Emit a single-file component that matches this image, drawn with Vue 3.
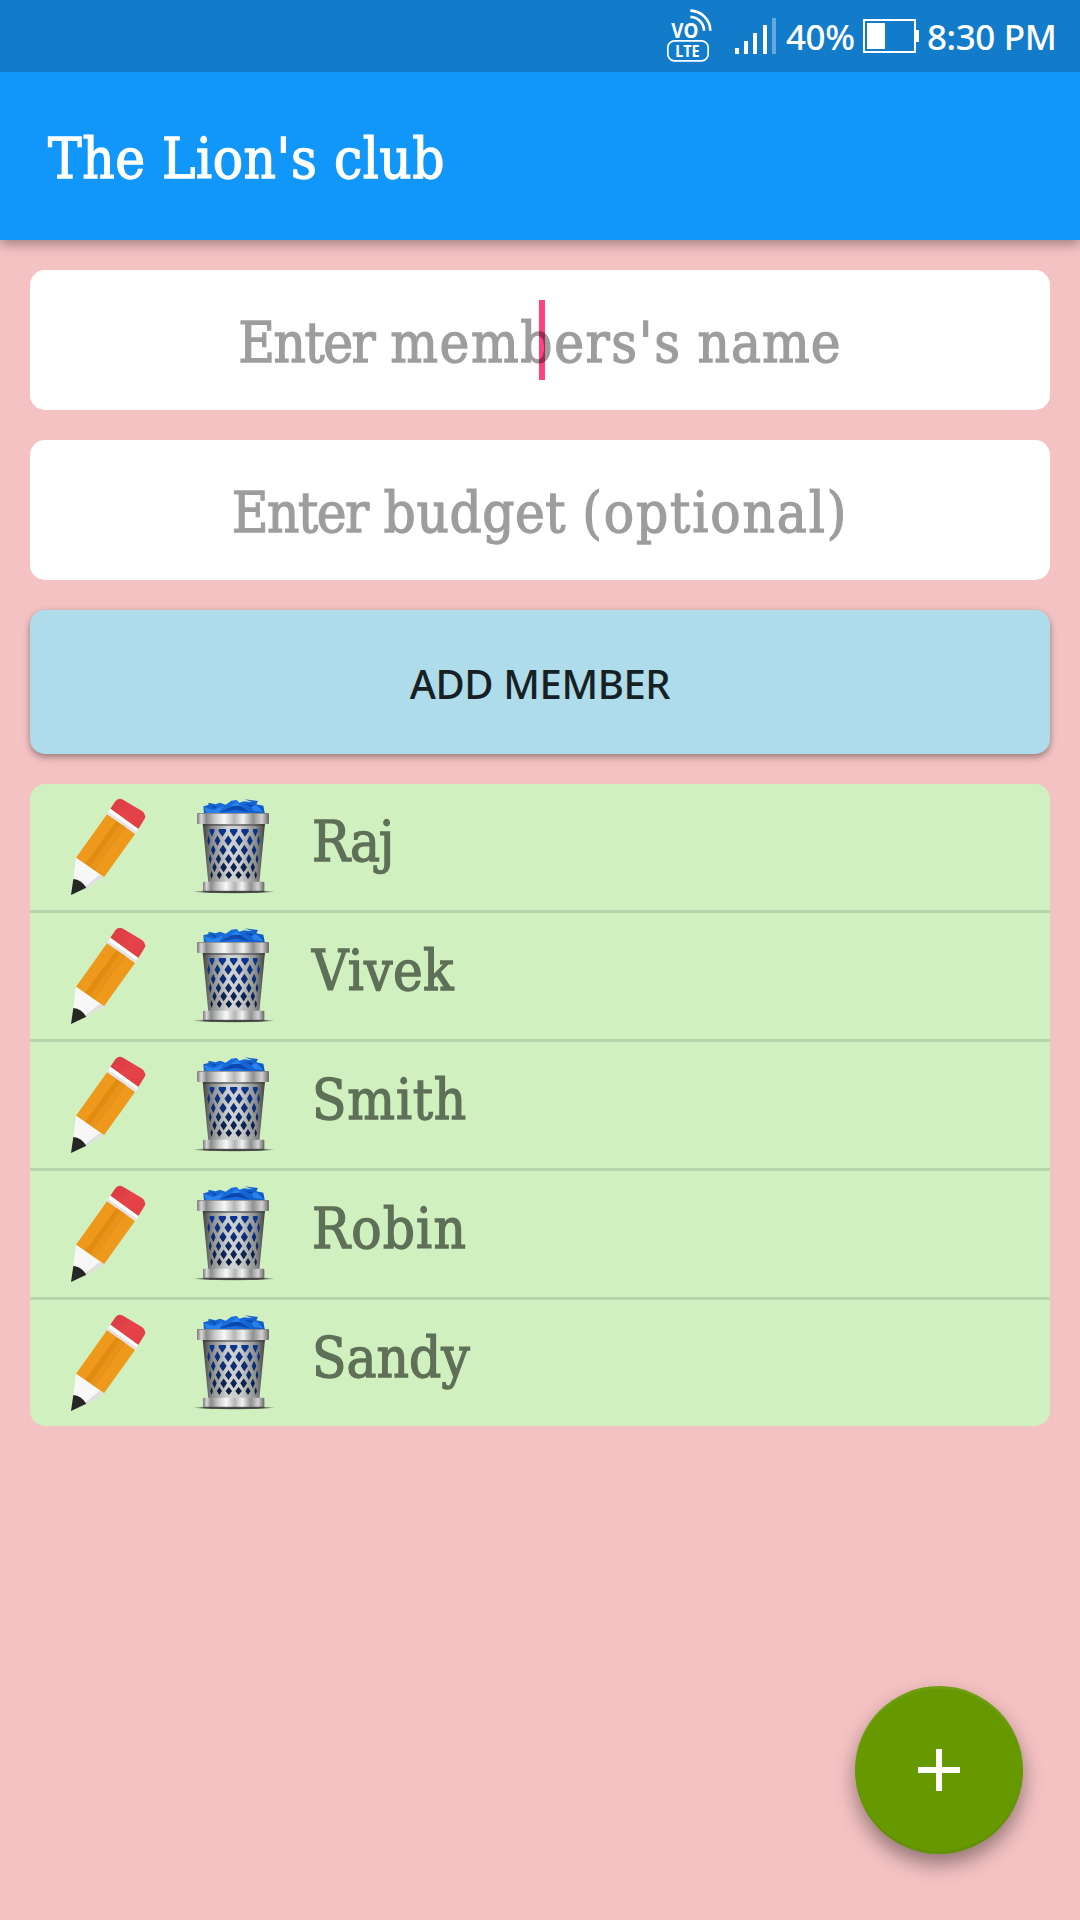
<script setup>
const members = [
  { name: 'Raj', spacing: -1.2 },
  { name: 'Vivek', spacing: 0.3 },
  { name: 'Smith', spacing: 0.8 },
  { name: 'Robin', spacing: 1.2 },
  { name: 'Sandy', spacing: 0 },
]

const nameHint = [
  { text: 'Enter', spacing: -1.5 },
  { text: "members's", spacing: 1.6 },
  { text: 'name', spacing: 1 },
]
const budgetHint = [
  { text: 'Enter', spacing: -1.5 },
  { text: 'budget', spacing: 0.55 },
  { text: '(optional)', spacing: 1.9 },
]

// Openings of the wire basket: alternating rows of diamonds that narrow toward the sides.
const cx = 641
const diamonds = []
;[
  [172, 0], [197, 1], [225, 0], [252, 1], [277, 0], [300, 1],
].forEach(([y, odd]) => {
  const k = 1 - (y - 172) * 0.0011
  const offs = odd ? [-77, -50, -17, 17, 50, 77] : [-65, -34, 0, 34, 65]
  offs.forEach((o) => {
    const w = (Math.abs(o) > 70 ? 4.5 : Math.abs(o) > 60 ? 7.5 : Math.abs(o) > 45 ? 9 : 11.5) * k
    const h = y === 300 ? 12 : 16.5 * k
    const x = cx + o * k
    diamonds.push(
      y === 172
        ? `M${x - w * 0.9} 162H${x + w * 0.9}L${x + w} 169L${x} 185L${x - w} 169Z`
        : `M${x} ${y - h}L${x + w} ${y}L${x} ${y + h}L${x - w} ${y}Z`,
    )
  })
})
const mesh = diamonds.join('')
</script>

<template>
  <div class="screen">
    <header class="status">
      <svg class="volte" viewBox="0 0 150 180" width="50" height="60">
        <rect x="23.500" y="107.500" width="121" height="60" rx="20" fill="none" stroke="#fff" stroke-width="5" />
        <g fill="none" stroke="#fff" stroke-width="8">
          <path d="M91 17A61 61 0 0 1 151 77" />
          <path d="M91 36A41 41 0 0 1 132 77" />
        </g>
        <text x="34" y="98" font-size="62" textLength="81" lengthAdjust="spacingAndGlyphs">VO</text>
        <text x="46" y="155" font-size="46" textLength="73" lengthAdjust="spacingAndGlyphs">LTE</text>
      </svg>
      <svg class="signal" viewBox="0 0 42 36" width="42" height="36" fill="#fff">
        <path d="M0 30h4v6h-4zM9 23h4v13h-4zM18 15h4v21h-4zM28 7h4v29h-4z" />
        <path d="M37 0h4v36h-4z" opacity=".35" />
      </svg>
      <span class="pct">40%</span>
      <svg class="battery" viewBox="0 0 57 34" width="57" height="34">
        <rect x="1" y="1" width="51" height="32" fill="none" stroke="#fff" stroke-width="2" />
        <path d="M4 4h18v26H4zM53 11h3v12h-3z" fill="#fff" />
      </svg>
      <span class="time">8:30 PM</span>
    </header>
    <div class="appbar"><h1>The Lion's club</h1></div>
    <main>
      <div class="field">
        <span class="caret"></span>
        <span class="hint"><template v-for="(w, i) in nameHint" :key="i">{{ i ? ' ' : '' }}<span :style="{ letterSpacing: w.spacing + 'px' }">{{ w.text }}</span></template></span>
      </div>
      <div class="field">
        <span class="hint"><template v-for="(w, i) in budgetHint" :key="i">{{ i ? ' ' : '' }}<span :style="{ letterSpacing: w.spacing + 'px' }">{{ w.text }}</span></template></span>
      </div>
      <button class="add"><span>ADD MEMBER</span></button>
      <ul class="list">
        <li v-for="m in members" :key="m.name">
          <svg class="icon" viewBox="150 69 231 294" width="77" height="98">
            <use href="#pencil" />
          </svg>
          <svg class="icon bin" viewBox="516 69 252 294" width="84" height="98">
            <use href="#bin" />
          </svg>
          <span class="name" :style="{ letterSpacing: m.spacing + 'px' }">{{ m.name }}</span>
        </li>
      </ul>
    </main>
    <button class="fab" aria-label="Add">
      <svg viewBox="0 0 42 42" width="42" height="42"><path d="M18 0h6v18h18v6H24v18h-6V24H0v-6h18z" fill="#fff" /></svg>
    </button>

    <svg class="defs" width="0" height="0">
      <defs>
        <linearGradient id="red" x1="0" y1="0" x2="1" y2="1">
          <stop offset="0" stop-color="#d93a42" /><stop offset=".5" stop-color="#e5434a" /><stop offset="1" stop-color="#e23c43" />
        </linearGradient>
        <linearGradient id="steel" x1="0" x2="1">
          <stop offset="0" stop-color="#77797b" /><stop offset=".06" stop-color="#d8d8d8" /><stop offset=".13" stop-color="#8b8b8b" />
          <stop offset=".25" stop-color="#c9cbca" /><stop offset=".38" stop-color="#f8f8f8" /><stop offset=".52" stop-color="#b4b6b5" />
          <stop offset=".64" stop-color="#f2f2f2" /><stop offset=".78" stop-color="#8f9190" /><stop offset=".9" stop-color="#d2d2d2" /><stop offset="1" stop-color="#666" />
        </linearGradient>
        <linearGradient id="body" x1="0" x2="1">
          <stop offset="0" stop-color="#3f4141" /><stop offset=".15" stop-color="#8a8c8c" /><stop offset=".4" stop-color="#d0d2d2" />
          <stop offset=".6" stop-color="#cccece" /><stop offset=".85" stop-color="#8c8e8e" /><stop offset="1" stop-color="#404242" />
        </linearGradient>
        <linearGradient id="mesh" x1="0" y1="0" x2="0" y2="1">
          <stop offset="0" stop-color="#0a3590" /><stop offset=".55" stop-color="#0b2a6c" /><stop offset="1" stop-color="#0d1b36" />
        </linearGradient>
        <linearGradient id="paper" x1="0" x2="1">
          <stop offset="0" stop-color="#1460c8" /><stop offset=".5" stop-color="#1a6ee0" /><stop offset="1" stop-color="#1058c4" />
        </linearGradient>
        <radialGradient id="ground">
          <stop offset="0" stop-color="#222" /><stop offset=".7" stop-color="#333" stop-opacity=".8" /><stop offset="1" stop-color="#444" stop-opacity="0" />
        </radialGradient>
        <g id="pencil">
          <path d="M271 101L285 80Q294 67 309 74L366 108Q380 118 374 131L355 162Z" fill="url(#red)" />
          <path d="M271 101L355 162L345 177L261 118Z" fill="#fff" />
          <path d="M266 111L350 169L345 177L261 118Z" fill="#e6e3e6" />
          <path d="M261 118L345 177L252 307L168 248Z" fill="#ee991c" />
          <path d="M289 138L316 157L224 284L196 266Z" fill="#e08c10" />
          <path d="M301 146L316 157L224 284L210 275Z" fill="#e8931a" />
          <path d="M168 248L252 307L199 338L160 312Z" fill="#f7f7f7" />
          <path d="M252 307L199 338L196 334L240 299Z" fill="#dedede" />
          <path d="M160 312Q184 314 199 338L153 360Z" fill="#262626" />
        </g>
        <g id="bin">
          <ellipse cx="642" cy="350" rx="125" ry="6" fill="url(#ground)" />
          <path d="M552 118L550 94L565 90L566 83L586 88L600 83L617 89L634 77L650 75L658 83L672 79L698 82L673 73L714 78L709 88L730 92L735 118Z" fill="url(#paper)" />
          <path d="M552 96L580 106L611 92L596 116H560ZM634 92L650 80L664 94L648 100ZM690 90L712 92L730 112L702 108Z" fill="#2a83ec" />
          <path d="M600 112L636 94L660 92L688 112L650 104ZM572 90L590 96L584 101ZM672 86L700 90L696 97Z" fill="#0c48ab" />
          <path d="M548 145H735L718 324H565Z" fill="url(#body)" />
          <path :d="mesh" fill="url(#mesh)" />
          <path d="M548 147H735L734 153H549Z" fill="#333" opacity=".5" />
          <rect x="531" y="114" width="216" height="33" rx="3" fill="url(#steel)" />
          <path d="M533 115.500H745" stroke="#777" stroke-width="2" />
          <rect x="549" y="320" width="184" height="30" rx="3" fill="url(#steel)" />
          <path d="M551 349H731" stroke="#333" stroke-width="3" />
        </g>
      </defs>
    </svg>
  </div>
</template>

<style>
body { background: #f4c2c3; }
</style>

<style scoped>
.screen {
  position: relative;
  display: flex;
  flex-direction: column;
  width: 1080px;
  height: 1920px;
  overflow: hidden;
  background: #f4c2c3;
  font-family: "DejaVu Serif Condensed", "DejaVu Serif", serif;
}
.status {
  display: flex;
  align-items: flex-start;
  height: 72px;
  background: #127ccb;
  color: #fff;
  padding-left: 660px;
  font: 500 35px/40px "Noto Sans", sans-serif;
  letter-spacing: -.4px;
  z-index: 2;
}
.volte { margin-top: 5px; overflow: visible; fill: #fff; font-weight: 700; letter-spacing: 0; }
.signal { margin: 18px 0 0 25px; }
.pct { width: 77px; margin: 17px 0 0 9px; white-space: nowrap; }
.battery { margin: 19px 0 0 0; }
.time { margin: 17px 0 0 7px; white-space: nowrap; }
.appbar {
  display: flex;
  align-items: center;
  height: 168px;
  flex: none;
  padding-left: 48px;
  background: #1196fa;
  color: #fff;
  box-shadow: 0 4px 12px rgba(0, 0, 0, .36);
  z-index: 1;
}
h1 {
  margin: 6px 0 0;
  font-size: 56px;
  line-height: 80px;
  font-weight: 400;
  letter-spacing: .55px;
  white-space: nowrap;
  -webkit-text-stroke: 1.3px currentColor;
}
main { display: flex; flex-direction: column; gap: 30px; padding: 30px; }
.field {
  position: relative;
  display: flex;
  align-items: center;
  justify-content: center;
  height: 140px;
  border-radius: 15px;
  background: #fff;
}
.hint {
  position: relative;
  margin-top: 6px;
  font-size: 56px;
  line-height: 80px;
  color: #000;
  opacity: .38;
  white-space: nowrap;
  -webkit-text-stroke: 1.3px currentColor;
}
.caret { position: absolute; left: 509px; top: 30px; width: 6px; height: 80px; background: #ff4081; }
.add {
  display: flex;
  align-items: center;
  justify-content: center;
  height: 144px;
  padding: 3px 0 0;
  border: 0;
  border-radius: 15px;
  background: #aedcea;
  color: #172124;
  font: 500 40px/50px "Noto Sans", sans-serif;
  letter-spacing: -.4px;
  box-shadow: 0 3px 7px rgba(0, 0, 0, .38);
}
.list { margin: 0; padding: 0; list-style: none; border-radius: 15px; background: #d0f0c0; overflow: hidden; }
li { display: flex; align-items: flex-start; height: 126px; padding-left: 40px; }
li + li { border-top: 3px solid #b8d4aa; height: 129px; box-sizing: border-box; }
.icon { margin-top: 14px; flex: none; }
.bin { margin-left: 45px; }
.name {
  margin: 18px 0 0 36px;
  font-size: 56px;
  line-height: 80px;
  color: #5f7058;
  white-space: nowrap;
  -webkit-text-stroke: 1.3px currentColor;
}
.fab {
  position: absolute;
  left: 855px;
  top: 1686px;
  display: flex;
  align-items: center;
  justify-content: center;
  width: 168px;
  height: 168px;
  padding: 0;
  border: 0;
  border-radius: 50%;
  background: #669900;
  box-shadow: 0 10px 20px rgba(0, 0, 0, .4), inset 0 3px 1px rgba(255, 255, 255, .06), inset 0 -3px 1px rgba(0, 0, 0, .05);
}
.defs { position: absolute; }
</style>
